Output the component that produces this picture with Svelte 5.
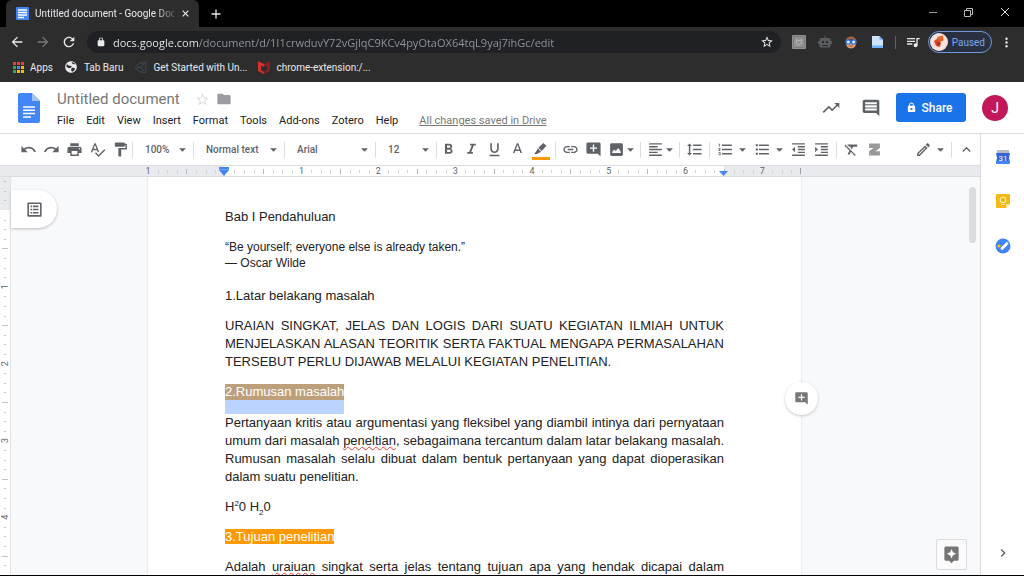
<script>
  const icons = {
    undo: 'M12.5 8c-2.65 0-5.05.99-6.9 2.6L2 7v9h9l-3.62-3.62c1.39-1.16 3.16-1.88 5.12-1.88 3.54 0 6.55 2.31 7.6 5.5l2.37-.78C21.08 11.03 17.15 8 12.5 8z',
    redo: 'M18.4 10.6C16.55 8.99 14.15 8 11.5 8c-4.65 0-8.58 3.03-9.96 7.22L3.9 16c1.05-3.19 4.05-5.5 7.6-5.5 1.95 0 3.73.72 5.12 1.88L13 16h9V7l-3.6 3.6z',
    print: 'M19 8H5c-1.66 0-3 1.34-3 3v6h4v4h12v-4h4v-6c0-1.66-1.34-3-3-3zm-3 11H8v-5h8v5zm3-7c-.55 0-1-.45-1-1s.45-1 1-1 1 .45 1 1-.45 1-1 1zm-1-9H6v4h12V3z',
    spell: 'M12.45 16h2.09L9.43 3H7.57L2.46 16h2.09l1.12-3h5.64l1.14 3zm-6.02-5L8.5 5.48 10.57 11H6.43zm15.16.59l-8.09 8.09L9.83 16l-1.41 1.41 5.09 5.09L23 13l-1.41-1.41z',
    paint: 'M18 4V3c0-.55-.45-1-1-1H5c-.55 0-1 .45-1 1v4c0 .55.45 1 1 1h12c.55 0 1-.45 1-1V6h1v4H9v11c0 .55.45 1 1 1h2c.55 0 1-.45 1-1v-9h8V4h-3z',
    bold: 'M15.6 10.79c.97-.67 1.65-1.77 1.65-2.79 0-2.26-1.75-4-4-4H7v14h7.04c2.09 0 3.71-1.7 3.71-3.79 0-1.52-.86-2.82-2.15-3.42zM10 6.5h3c.83 0 1.5.67 1.5 1.5s-.67 1.5-1.5 1.5h-3v-3zm3.5 9H10v-3h3.5c.83 0 1.5.67 1.5 1.5s-.67 1.5-1.5 1.5z',
    italic: 'M10 4v2.5h2.4l-3.7 9H6V18h8v-2.5h-2.4l3.7-9H18V4z',
    underline: 'M12 17c3.31 0 6-2.69 6-6V3h-2.3v8c0 1.93-1.77 3.7-3.7 3.7S8.3 12.93 8.3 11V3H6v8c0 3.31 2.69 6 6 6zm-7 2.5v2h14v-2H5z',
    color: 'M11 3L5.5 17h2.25l1.12-3h6.25l1.12 3h2.25L13 3h-2zm-1.38 9L12 5.67 14.38 12H9.62z',
    marker: 'M16.5 1.5l5 4.5-7.5 8.5-5.5-5.5zM7.5 10l5.5 5.5-2.5 1.5-1.5 0-2 2H2l3.5-4.5z',
    link: 'M3.9 12c0-1.71 1.39-3.1 3.1-3.1h4V7H7c-2.76 0-5 2.24-5 5s2.24 5 5 5h4v-1.9H7c-1.71 0-3.1-1.39-3.1-3.1zM8 13h8v-2H8v2zm9-6h-4v1.9h4c1.71 0 3.1 1.39 3.1 3.1s-1.39 3.1-3.1 3.1h-4V17h4c2.76 0 5-2.24 5-5s-2.24-5-5-5z',
    addComment: 'M21.99 4c0-1.1-.89-2-1.99-2H4c-1.1 0-2 .9-2 2v12c0 1.1.9 2 2 2h14l4 4-.01-18zM17 11h-4v4h-2v-4H7V9h4V5h2v4h4v2z',
    image: 'M21 19V5c0-1.1-.9-2-2-2H5c-1.1 0-2 .9-2 2v14c0 1.1.9 2 2 2h14c1.1 0 2-.9 2-2zM6 17v-2l3-3 2 2 3.5-4L18 15v2z',
    align: 'M15 15H3v2h12v-2zm0-8H3v2h12V7zM3 13h18v-2H3v2zm0 8h18v-2H3v2zM3 3v2h18V3H3z',
    spacing: 'M6 7h2.5L5 3.5 1.5 7H4v10H1.5L5 20.5 8.5 17H6V7zm4-2v2h12V5H10zm0 14h12v-2H10v2zm0-6h12v-2H10v2z',
    numbers: 'M2 17h2v.5H3v1h1v.5H2v1h3v-4H2v1zm1-9h1V4H2v1h1v3zm-1 3h1.8L2 13.1v.9h3v-1H3.2L5 10.9V10H2v1zm5-6v2h14V5H7zm0 14h14v-2H7v2zm0-6h14v-2H7v2z',
    bullets: 'M2.5 4.5h3v3h-3zm0 6h3v3h-3zm0 6h3v3h-3zM7 19h14v-2H7v2zm0-6h14v-2H7v2zm0-8v2h14V5H7z',
    outdent: 'M11 17h10v-2H11v2zm-8-5l4 4V8l-4 4zm0 9h18v-2H3v2zM3 3v2h18V3H3zm8 6h10V7H11v2zm0 4h10v-2H11v2z',
    indent: 'M3 21h18v-2H3v2zM3 8v8l4-4-4-4zm8 9h10v-2H11v2zM3 3v2h18V3H3zm8 6h10V7H11v2zm0 4h10v-2H11v2z',
    clear: 'M3.27 5L2 6.27l6.97 6.97L6.5 19h3l1.57-3.66L16.73 21 18 19.73 3.55 5.27 3.27 5zM6 5v.18L8.82 8h2.4l-.72 1.68 2.1 2.1L14.21 8H20V5H6z',
    zotero: 'M2 1h20v8l-8 6h8v8H2v-8l8-6H2z',
    pencil: 'M14.06 9.02l.92.92L5.92 19H5v-.92l9.06-9.06M17.66 3c-.25 0-.51.1-.7.29l-1.83 1.83 3.75 3.75 1.83-1.83c.39-.39.39-1.02 0-1.41l-2.34-2.34c-.2-.2-.45-.29-.71-.29zm-3.6 3.19L3 17.25V21h3.75L17.81 9.94l-3.75-3.75z',
    up: 'M12 8l-6 6 1.41 1.41L12 10.83l4.59 4.58L18 14z',
    right: 'M10 6L8.59 7.41 13.17 12l-4.58 4.59L10 18l6-6z',
    trend: 'M16 6l2.29 2.29-4.88 4.88-4-4L2 16.59 3.41 18l6-6 4 4 6.3-6.29L22 12V6z',
    comment: 'M21.99 4c0-1.1-.89-2-1.99-2H4c-1.1 0-2 .9-2 2v12c0 1.1.9 2 2 2h14l4 4-.01-18zM19 15H5v-2.5h14V15zm0-3.7H5V8.7h14v2.6zm0-3.8H5V5h14v2.5z',
    lock: 'M18 8h-1V6c0-2.76-2.24-5-5-5S7 3.24 7 6v2H6c-1.1 0-2 .9-2 2v10c0 1.1.9 2 2 2h12c1.1 0 2-.9 2-2V10c0-1.1-.9-2-2-2zM9 8V6a3 3 0 016 0v2zm3 10a2.5 2.5 0 110-5 2.5 2.5 0 010 5z',
    padlock: 'M18 8h-1V6c0-2.76-2.24-5-5-5S7 3.24 7 6v2H6c-1.1 0-2 .9-2 2v10c0 1.1.9 2 2 2h12c1.1 0 2-.9 2-2V10c0-1.1-.9-2-2-2zM9 8V6a3 3 0 016 0v2z',
    star: 'M22 9.24l-7.19-.62L12 2 9.19 8.63 2 9.24l5.46 4.73L5.82 21 12 17.27 18.18 21l-1.63-7.03L22 9.24zM12 15.4l-3.76 2.27 1-4.28-3.32-2.88 4.38-.38L12 6.1l1.71 4.04 4.38.38-3.32 2.88 1 4.28L12 15.4z',
    folder: 'M10 4H4c-1.1 0-1.99.9-1.99 2L2 18c0 1.1.9 2 2 2h16c1.1 0 2-.9 2-2V8c0-1.1-.9-2-2-2h-8l-2-2z',
    back: 'M20 11H7.83l5.59-5.59L12 4l-8 8 8 8 1.41-1.41L7.83 13H20v-2z',
    forward: 'M12 4l-1.41 1.41L16.17 11H4v2h12.17l-5.58 5.59L12 20l8-8z',
    reload: 'M17.65 6.35C16.2 4.9 14.21 4 12 4c-4.42 0-7.99 3.58-7.99 8s3.57 8 7.99 8c3.73 0 6.84-2.55 7.73-6h-2.08c-.82 2.33-3.04 4-5.65 4-3.31 0-6-2.69-6-6s2.69-6 6-6c1.66 0 3.14.69 4.22 1.78L13 11h7V4l-2.35 2.35z',
    queue: 'M15 6H3v2h12V6zm0 4H3v2h12v-2zM3 16h8v-2H3v2zM17 6v8.18c-.31-.11-.65-.18-1-.18-1.66 0-3 1.34-3 3s1.34 3 3 3 3-1.34 3-3V8h3V6h-5z',
    more: 'M12 8a2 2 0 100-4 2 2 0 000 4zm0 2a2 2 0 100 4 2 2 0 000-4zm0 6a2 2 0 100 4 2 2 0 000-4z',
    outline: 'M19 5v14H5V5h14m1.1-2H3.9c-.5 0-.9.4-.9.9v16.2c0 .4.4.9.9.9h16.2c.4 0 .9-.5.9-.9V3.9c0-.5-.5-.9-.9-.9zM10 7h7v2h-7V7zm0 4h7v2h-7v-2zm0 4h7v2h-7zM7 7h2v2H7zm0 4h2v2H7zm0 4h2v2H7z',
    explore: 'M19 2H5c-1.1 0-2 .9-2 2v14c0 1.1.9 2 2 2h4l3 3 3-3h4c1.1 0 2-.9 2-2V4c0-1.1-.9-2-2-2zm-5.12 10.88L12 17l-1.88-4.12L6 11l4.12-1.88L12 5l1.88 4.12L18 11l-4.12 1.88z',
    globe: 'M12 2C6.48 2 2 6.48 2 12s4.48 10 10 10 10-4.48 10-10S17.52 2 12 2zM5 7c2 3 6 4 8 3 1 3-2 4-4 4-2-1-4-2-5-3zm8-3c2 0 5 1 6 3-2 1-4 0-5-1zm0 10c2-1 5-1 6 1-1 3-3 4-5 5-2-1-2-4-1-6z',
    close: 'M19 6.8L17.2 5 12 10.2 6.8 5 5 6.8 10.2 12 5 17.2 6.8 19 12 13.8 17.2 19 19 17.2 13.8 12z',
    plus: 'M21 13.3h-7.7v7.7h-2.6v-7.7H3v-2.6h7.7V3h2.6v7.7H21z'
  };
  const menus = ['File', 'Edit', 'View', 'Insert', 'Format', 'Tools', 'Add-ons', 'Zotero', 'Help'];
  const appColors = ['#ea4335', '#ea4335', '#ea4335', '#34a853', '#4285f4', '#fbbc04', '#34a853', '#fbbc04', '#fbbc04'];
  const INCH = 76.8;
  const ticks = (count) =>
    Array.from({ length: count * 8 + 1 }, (_, i) => ({ at: (i * INCH) / 8, half: i % 8 === 4, whole: i % 8 === 0 })).filter((t) => !t.whole);
  const hTicks = ticks(8).concat([1, 2, 3].map((n) => ({ at: 8 * INCH + (n * INCH) / 8, half: false })));
  const vTicks = ticks(13);
</script>

{#snippet icon(name, size = 17)}
  <svg width={size} height={size} viewBox="0 0 24 24" fill="currentColor" fill-rule="evenodd" aria-hidden="true"><path d={icons[name]} /></svg>
{/snippet}

{#snippet arrow()}
  <svg class="arrow" width="7" height="4" viewBox="0 0 8 4" fill="currentColor" aria-hidden="true"><path d="M0 0h8L4 4z" /></svg>
{/snippet}

{#snippet tool(name, label)}
  <button class="tool" aria-label={label}>{@render icon(name)}</button>
{/snippet}

{#snippet combo(name, label, wide)}
  <button class="tool combo" class:wide aria-label={label}>{@render icon(name)}{@render arrow()}</button>
{/snippet}

{#snippet pick(label, value, size)}
  <label class="pick {size}">
    <select aria-label={label}><option>{value}</option></select>
    {@render arrow()}
  </label>
{/snippet}

<div class="app">
  <div class="tabs">
    <div class="tab">
      <svg width="13" height="13" viewBox="0 0 13 13" aria-hidden="true"><rect width="13" height="13" rx="1" fill="#4285f4" /><path d="M2 3h9M2 5.5h9M2 8h9M2 10.5h6" stroke="#fff" stroke-width="1.3" /></svg>
      <span class="tab-title">Untitled document - Google Doc</span>
      <button class="plain" aria-label="Close tab">{@render icon('close', 11)}</button>
    </div>
    <button class="plain new-tab" aria-label="New tab">{@render icon('plus', 12)}</button>
    <div class="window">
      <button class="plain" aria-label="Minimize"><svg width="10" height="10" viewBox="0 0 10 10" stroke="#999" fill="none"><path d="M1 5.5h8" /></svg></button>
      <button class="plain" aria-label="Restore"><svg width="10" height="10" viewBox="0 0 10 10" stroke="#bbb" fill="none"><path d="M.5 3.5h6v6h-6zM2.5 3.5v-2h6v6h-2" /></svg></button>
      <button class="plain" aria-label="Close window"><svg width="10" height="10" viewBox="0 0 10 10" stroke="#ddd" fill="none"><path d="M1 1l8 8M9 1l-8 8" /></svg></button>
    </div>
  </div>

  <div class="nav">
    <button class="plain" aria-label="Back">{@render icon('back', 16)}</button>
    <button class="plain dim" aria-label="Forward">{@render icon('forward', 16)}</button>
    <button class="plain" aria-label="Reload">{@render icon('reload', 16)}</button>
    <div class="omnibox">
      {@render icon('padlock', 10)}
      <input class="url" aria-label="Address" value="docs.google.com/document/d/1I1crwduvY72vGjlqC9KCv4pyOtaOX64tqL9yaj7ihGc/edit" />
      <button class="plain" aria-label="Bookmark this page">{@render icon('star', 14)}</button>
    </div>
    <div class="extensions">
      <svg width="14" height="14" viewBox="0 0 14 14" aria-hidden="true"><rect width="14" height="14" rx="1" fill="#929292" /><path d="M1.5 1.5h11v11h-11z" fill="none" stroke="#7b7b7b" /><path d="M4.5 4.5v4L7 10l2.5-1.5v-4L7 6z" fill="none" stroke="#b5b5b5" /></svg>
      <svg width="14" height="14" viewBox="0 0 14 14" fill="#5b5c5e" aria-hidden="true"><path d="M6.5 1h1v2h3.5q1.5 0 1.5 1.5V6h1.5v3h-1.5v2q0 1.5-1.5 1.5H3Q1.5 12.5 1.5 11V9H0V6h1.5V4.5Q1.5 3 3 3h3.5z" /><path d="M4 6h2v2H4zm4 0h2v2H8zM4 10h6v1H4z" fill="#292a2d" /></svg>
      <svg width="14" height="14" viewBox="0 0 14 14" aria-hidden="true"><path d="M2 8h10q0 5-5 5.500Q2 13 2 8z" fill="#dda078" /><path d="M1.5 9C0 -1 14 -1 12.5 9L10 4.5H4z" fill="#a5623c" /><circle cx="4.3" cy="7" r="2.2" fill="#d3e8ff" stroke="#2f6fd0" stroke-width="1.2" /><circle cx="9.7" cy="7" r="2.2" fill="#d3e8ff" stroke="#2f6fd0" stroke-width="1.2" /><path d="M5 11h4" stroke="#b5452f" /></svg>
      <svg width="14" height="14" viewBox="0 0 14 14" aria-hidden="true"><path d="M2 1h7.500L13 4.500V13H2z" fill="#cfe2fb" /><path d="M9.500 1v3.500H13z" fill="#5d9bea" /><path d="M2 10.500h11V13H2z" fill="#6db3f5" /></svg>
    </div>
    <span class="divider"></span>
    <button class="plain" aria-label="Media controls">{@render icon('queue', 16)}</button>
    <button class="profile">
      <svg width="18" height="18" viewBox="0 0 18 18" aria-hidden="true"><circle cx="9" cy="9" r="9" fill="#fbe3dd" /><path d="M7 4l6-1.5.5 5L10 9z" fill="#e8622c" /><path d="M4 8l4-3 3 5-1 4-4-1z" fill="#dc4a25" /><path d="M7 9l3 1-2 3z" fill="#7d2f24" /></svg>
      Paused
    </button>
    <button class="plain" aria-label="Chrome menu">{@render icon('more', 15)}</button>
  </div>

  <div class="bookmarks">
    <a href="#apps"><svg width="12" height="12" viewBox="0 0 12 12" aria-hidden="true">{#each appColors as c, i}<rect x={(i % 3) * 4 + 1} y={Math.floor(i / 3) * 4 + 1} width="3" height="3" fill={c} />{/each}</svg><span>Apps</span></a>
    <a href="#tab">{@render icon('globe', 14)}<span>Tab Baru</span></a>
    <a href="#unity"><svg width="13" height="13" viewBox="0 0 13 13" fill="none" stroke="#3f4a59" aria-hidden="true"><path d="M1 6.5L6 2l5.5-.5.5 4-1 1 1 1-.5 4L6 11zM3 6.5h4l3-4M7 6.5l3 4" /></svg><span>Get Started with Un...</span></a>
    <a href="#extension"><svg width="12" height="13" viewBox="0 0 12 13" aria-hidden="true"><path d="M0 0l6 3v3L3 4.5V9l3 2v2l-6-3z" fill="#d5322d" /><path d="M12 0L6 3v3l3-1.5V9l-3 2v2l6-3z" fill="#8c1d20" /></svg><span>chrome-extension:/...</span></a>
  </div>

  <header class="header">
    <svg width="22" height="30" viewBox="0 0 22 30" aria-label="Docs home" role="img"><path d="M2 0h12l8 8v20a2 2 0 01-2 2H2a2 2 0 01-2-2V2a2 2 0 012-2z" fill="#4285f4" /><path d="M14 0l8 8h-8z" fill="#a1c2fa" /><path d="M5 14h12M5 17.3h12M5 20.6h12M5 24h8" stroke="#fff" stroke-width="1.5" /></svg>
    <div class="heading">
      <div class="title-row">
        <input class="title" aria-label="Document title" value="Untitled document" />
        <button class="plain pale" aria-label="Star">{@render icon('star', 15)}</button>
        <button class="plain mid" aria-label="Move to folder">{@render icon('folder', 16)}</button>
      </div>
      <nav class="menus">
        {#each menus as m}<button class="plain">{m}</button>{/each}
        <a class="saved" href="#saved">All changes saved in Drive</a>
      </nav>
    </div>
    <div class="actions">
      <button class="plain" aria-label="Activity">{@render icon('trend', 20)}</button>
      <button class="plain" aria-label="Comments">{@render icon('comment', 20)}</button>
      <button class="share">{@render icon('lock', 11)}Share</button>
      <button class="avatar" aria-label="Account">J</button>
    </div>
  </header>

  <div class="body">
    <main class="editor">
      <div class="toolbar">
        {@render tool('undo', 'Undo')}
        {@render tool('redo', 'Redo')}
        {@render tool('print', 'Print')}
        {@render tool('spell', 'Spelling')}
        {@render tool('paint', 'Paint format')}
        <i class="tight"></i>
        {@render pick('Zoom', '100%', 'small')}
        <i class="tight"></i>
        {@render pick('Style', 'Normal text', 'large')}
        <i class="tight"></i>
        {@render pick('Font', 'Arial', 'large')}
        <i class="tight"></i>
        {@render pick('Font size', '12', 'small')}
        <i class="tight"></i>
        {@render tool('bold', 'Bold')}
        {@render tool('italic', 'Italic')}
        {@render tool('underline', 'Underline')}
        {@render tool('color', 'Text colour')}
        <button class="tool swatch" aria-label="Highlight colour">{@render icon('marker', 15)}</button>
        <i></i>
        {@render tool('link', 'Insert link')}
        {@render tool('addComment', 'Add comment')}
        {@render combo('image', 'Insert image', false)}
        <i></i>
        {@render combo('align', 'Align', false)}
        <i></i>
        {@render tool('spacing', 'Line spacing')}
        <i></i>
        {@render combo('numbers', 'Numbered list', true)}
        {@render combo('bullets', 'Bulleted list', true)}
        {@render tool('outdent', 'Decrease indent')}
        {@render tool('indent', 'Increase indent')}
        <i></i>
        {@render tool('clear', 'Clear formatting')}
        <button class="tool grey" aria-label="Zotero">{@render icon('zotero', 13)}</button>
        <span class="grow"></span>
        {@render combo('pencil', 'Editing mode', true)}
        <i></i>
        {@render tool('up', 'Hide the menus')}
      </div>

      <div class="ruler">
        <svg width="653" height="10" viewBox="0 0 653 10" aria-hidden="true">
          <rect x={INCH} width={INCH * 6.5} height="10" fill="#fff" />
          {#each hTicks as t}
            <rect x={Math.round(t.at)} y={t.half ? 3 : 4} width="1" height={t.half ? 5 : 3} fill={t.half ? '#b4b7bb' : '#cfd1d4'} />
          {/each}
          <rect x="652" y="2" width="1" height="6" fill="#9a9da1" />
          <text x="0" y="8">1</text>
          {#each [1, 2, 3, 4, 5, 6, 7] as n}<text x={(n + 1) * INCH} y="8">{n}</text>{/each}
          <path d="M71 1h10v3l-5 6-5-6zM571 5h9l-4.5 5z" fill="#4285f4" />
          <path d="M71 3.5h10" stroke="#6ea2f8" />
        </svg>
      </div>

      <div class="workspace">
        <div class="vruler">
          <svg width="10" height="1020" viewBox="0 0 10 1020" aria-hidden="true">
            <rect width="10" height="33" fill="#e8eaed" />
            {#each [4, 14, 23] as y}<rect x="4" {y} width="2" height="1" fill="#bfc2c6" />{/each}
            {#each vTicks as t}
              <rect x={t.half ? 2 : 4} y={Math.round(33 + t.at)} width={t.half ? 6 : 2} height="1" fill="#bfc2c6" />
            {/each}
            {#each [1, 2, 3, 4] as n}
              <text transform="translate(8 {33 + n * INCH}) rotate(-90)">{n}</text>
            {/each}
          </svg>
        </div>
        <div class="canvas">
          <article class="page">
            <p>Bab I Pendahuluan</p>
            <blockquote>“Be yourself; everyone else is already taken.”<br />— Oscar Wilde</blockquote>
            <p>1.Latar belakang masalah</p>
            <p class="full">URAIAN SINGKAT, JELAS DAN LOGIS DARI SUATU KEGIATAN ILMIAH UNTUK MENJELASKAN ALASAN TEORITIK SERTA FAKTUAL MENGAPA PERMASALAHAN TERSEBUT PERLU DIJAWAB MELALUI KEGIATAN PENELITIAN.</p>
            <h2 class="selected">2.Rumusan masalah</h2>
            <p class="full">Pertanyaan kritis atau argumentasi yang fleksibel yang diambil intinya dari pernyataan umum dari masalah <u>peneltian</u>, sebagaimana tercantum dalam latar belakang masalah. Rumusan masalah selalu dibuat dalam bentuk pertanyaan yang dapat dioperasikan dalam suatu penelitian.</p>
            <p>H<sup>2</sup>0 H<sub>2</sub>0</p>
            <h2><mark>3.Tujuan penelitian</mark></h2>
            <p class="full spread">Adalah <u>uraiuan</u> singkat serta jelas tentang tujuan apa yang hendak dicapai dalam</p>
            <button class="bubble" aria-label="Add comment here">{@render icon('addComment', 15)}</button>
          </article>
          <button class="outline-tab" aria-label="Show outline">{@render icon('outline', 19)}</button>
          <span class="thumb"></span>
          <button class="explore" aria-label="Explore">{@render icon('explore', 19)}</button>
        </div>
      </div>
    </main>

    <aside class="side">
      <button class="plain" aria-label="Calendar"><svg width="14" height="14" viewBox="0 0 14 14"><path d="M1 0h12v4H1z" fill="#b7bdc7" /><path d="M0 3h14l-1 5 1 5H0l1-5z" fill="#3367d6" /><path d="M0 11h14v2a1 1 0 01-1 1H1a1 1 0 01-1-1z" fill="#4285f4" /><text class="cal" x="7" y="11">31</text></svg></button>
      <button class="plain" aria-label="Keep"><svg width="14" height="14" viewBox="0 0 14 14"><path d="M1 0h12a1 1 0 011 1v9l-4 4H1a1 1 0 01-1-1V1a1 1 0 011-1z" fill="#f5b912" /><path d="M10 14v-4h4z" fill="#fde293" /><path d="M5.5 8.5C3 6 4.5 3 7 3s4 3 1.5 5.5zM5.5 10.5h3" fill="none" stroke="#fff3cf" stroke-width="1.1" /></svg></button>
      <button class="plain" aria-label="Tasks"><svg width="16" height="16" viewBox="0 0 16 16"><circle cx="8" cy="8" r="7.5" fill="#4285f4" /><path d="M7 10.5L12 5.5" stroke="#fff" stroke-width="2.8" stroke-linecap="round" /><circle cx="4" cy="8" r="1.6" fill="#fbbc04" /></svg></button>
      <button class="plain last" aria-label="Hide side panel">{@render icon('right', 16)}</button>
    </aside>
  </div>
</div>

<style>
  :global(body) { margin: 0; background: #fff; }
  .app { height: 100vh; box-sizing: border-box; display: flex; flex-direction: column; overflow: hidden; border-bottom: 1px solid #000; font-family: Roboto, sans-serif; color: #3c4043; }
  .app :global(svg) { display: block; flex: none; }
  button { border: 0; padding: 0; margin: 0; background: none; color: inherit; font: inherit; display: flex; align-items: center; justify-content: center; cursor: pointer; flex: none; }
  input, select { border: 0; padding: 0; margin: 0; background: none; font: inherit; color: inherit; outline: 0; min-width: 0; }
  a { color: inherit; text-decoration: none; }

  .tabs, .nav, .bookmarks { font-family: Roboto, sans-serif; font-size: 10px; color: #e8eaed; display: flex; align-items: center; flex: none; }
  .tabs { height: 27px; background: #000; }
  .tab { align-self: stretch; width: 175px; margin-left: 6px; padding: 0 8px 0 10px; background: #2d2d2e; border-radius: 6px 6px 0 0; display: flex; align-items: center; gap: 6px; }
  .tab-title { flex: 1; overflow: hidden; white-space: nowrap; mask-image: linear-gradient(90deg, #000 120px, transparent 144px); }
  .new-tab { margin-left: 11px; }
  .window { margin-left: auto; display: flex; gap: 26px; padding: 0 14px 4px 0; }
  .nav { height: 30px; background: #2d2d2e; padding-left: 9px; padding-right: 10px; }
  .nav > .plain { margin-right: 10px; }
  .nav > .plain:last-child { margin: 0 0 0 7px; }
  .dim { color: #77797c; }
  .omnibox { flex: 1; height: 22px; background: #202124; border-radius: 11px; display: flex; align-items: center; gap: 7px; padding: 0 7px 0 9px; min-width: 0; }
  .url { flex: 1; font-family: 'Open Sans', sans-serif; font-size: 11px; color: transparent; background: linear-gradient(90deg, #f1f3f4 86px, #94989d 86px); background-clip: text; -webkit-background-clip: text; }
  .extensions { display: flex; gap: 12px; margin-left: 11px; }
  .divider { width: 1px; height: 13px; background: #5f6368; margin: 0 9px 0 11px; }
  .nav > .profile { height: 22px; box-sizing: border-box; border: 1px solid #6d9bdc; border-radius: 11px; background: #293141; color: #7ba7ee; padding: 0 6px 0 1px; gap: 4px; margin-left: -3px; }
  .bookmarks { height: 25px; background: #2d2d2e; box-sizing: border-box; padding: 0 12px 5px; gap: 11px; }
  .bookmarks a { display: flex; align-items: center; gap: 6px; }

  .header { height: 51px; display: flex; align-items: center; padding: 0 16px 0 18px; border-bottom: 1px solid #dadce0; flex: none; }
  .heading { margin-left: 17px; padding-top: 4px; display: flex; flex-direction: column; gap: 3px; }
  .title-row { display: flex; align-items: center; gap: 6px; }
  .title { font-size: 15px; line-height: 20px; height: 20px; width: 132px; color: #777; }
  .pale { color: #dadce0; }
  .mid { color: #9a9c9f; }
  .menus { display: flex; gap: 12px; font-size: 11px; line-height: 18px; color: #202124; }
  .saved { color: #777; text-decoration: underline; margin-left: 9px; }
  .actions { margin-left: auto; display: flex; align-items: center; color: #5f6368; }
  .actions > .plain { margin-right: 20px; }
  .share { width: 70px; height: 29px; box-sizing: border-box; padding-right: 4px; margin-left: -5px; border-radius: 3px; background: #1a73e8; color: #fff; font-size: 12px; font-weight: 500; gap: 5px; }
  .avatar { width: 26px; height: 26px; margin-left: 16px; border-radius: 50%; background: #c2185b; color: #fff; font-size: 14px; }

  .body { flex: 1; min-height: 0; display: flex; }
  .editor { flex: 1; min-width: 0; display: flex; flex-direction: column; }
  .toolbar { height: 31px; flex: none; display: flex; align-items: center; padding: 0 2px 0 17px; color: #5f6368; }
  .toolbar i { width: 1px; height: 16px; background: #dadce0; margin: 0 3px; flex: none; }
  .toolbar i.tight { margin: 0; }
  .tool { width: 23px; height: 23px; }
  .combo { width: 32px; gap: 2px; }
  .combo.wide { width: 37px; gap: 5px; }
  .swatch { background: linear-gradient(#ff9900, #ff9900) center 19px / 18px 3px no-repeat; }
  .grey { color: #999; }
  .grow { flex: 1; }
  .pick { display: flex; align-items: center; box-sizing: border-box; padding: 0 7px 0 12px; flex: none; font-size: 10px; font-weight: 500; }
  .pick.small { width: 60px; }
  .pick.large { width: 90px; }
  .pick select { appearance: none; flex: 1; }

  .ruler { height: 10px; flex: none; background: #e8eaed; border-top: 1px solid #dadce0; border-bottom: 1px solid #dadce0; display: flex; justify-content: center; padding-right: 31px; }
  .ruler svg { overflow: visible; }
  svg text { font: 9px Roboto, sans-serif; fill: #5f6368; text-anchor: middle; }
  svg text.cal { font-size: 8px; fill: #fff; }
  .workspace { flex: 1; min-height: 0; display: flex; overflow: hidden; }
  .vruler { width: 10px; border-right: 1px solid #e0e2e5; overflow: hidden; flex: none; }
  .canvas { flex: 1; position: relative; background: #f8f9fb; display: flex; justify-content: center; padding-right: 42px; }
  .page { position: relative; width: 653px; box-sizing: border-box; padding: 31px 77px 0; background: #fff; box-shadow: 0 0 2px #cfd1d4; font: 13px/18px 'Liberation Sans', Arial, sans-serif; color: #222; }
  .page p { margin: 0 0 12px; }
  .page blockquote { margin: 13px 0 16px; font-size: 12px; line-height: 16px; }
  .page h2 { margin: 0 0 12px; font: inherit; color: #fff; }
  .page .full { text-align: justify; }
  .page .spread { text-align-last: justify; }
  .page mark { background: #ff9900; color: #fff; }
  .page .selected { width: fit-content; margin: 13px 0 0; line-height: 16px; background: #be9f7b; border-bottom: 14px solid #bbd3ff; }
  u { text-decoration: underline wavy #e53935 1px; text-underline-offset: 1px; text-decoration-skip-ink: none; }
  sup, sub { font-size: 8px; line-height: 0; }
  .bubble { position: absolute; right: -17px; top: 205px; width: 33px; height: 33px; border-radius: 50%; background: #fff; color: #777; box-shadow: 0 1px 3px #c4c6c9; }
  .outline-tab { position: absolute; left: 0; top: 13px; width: 46px; height: 38px; border-radius: 0 19px 19px 0; background: #fff; color: #5f6368; box-shadow: 0 1px 3px #b8babd; }
  .thumb { position: absolute; right: 4px; top: 10px; width: 7px; height: 56px; border-radius: 4px; background: #dadce0; }
  .explore { position: absolute; right: 13px; bottom: 5px; width: 31px; height: 31px; box-sizing: border-box; background: #fafafa; border: 1px solid #dadce0; border-radius: 2px; color: #757575; }

  .side { width: 44px; box-sizing: border-box; border-left: 1px solid #dadce0; flex: none; display: flex; flex-direction: column; align-items: center; gap: 30px; padding: 16px 0 14px; color: #5f6368; }
  .last { margin-top: auto; }
</style>
